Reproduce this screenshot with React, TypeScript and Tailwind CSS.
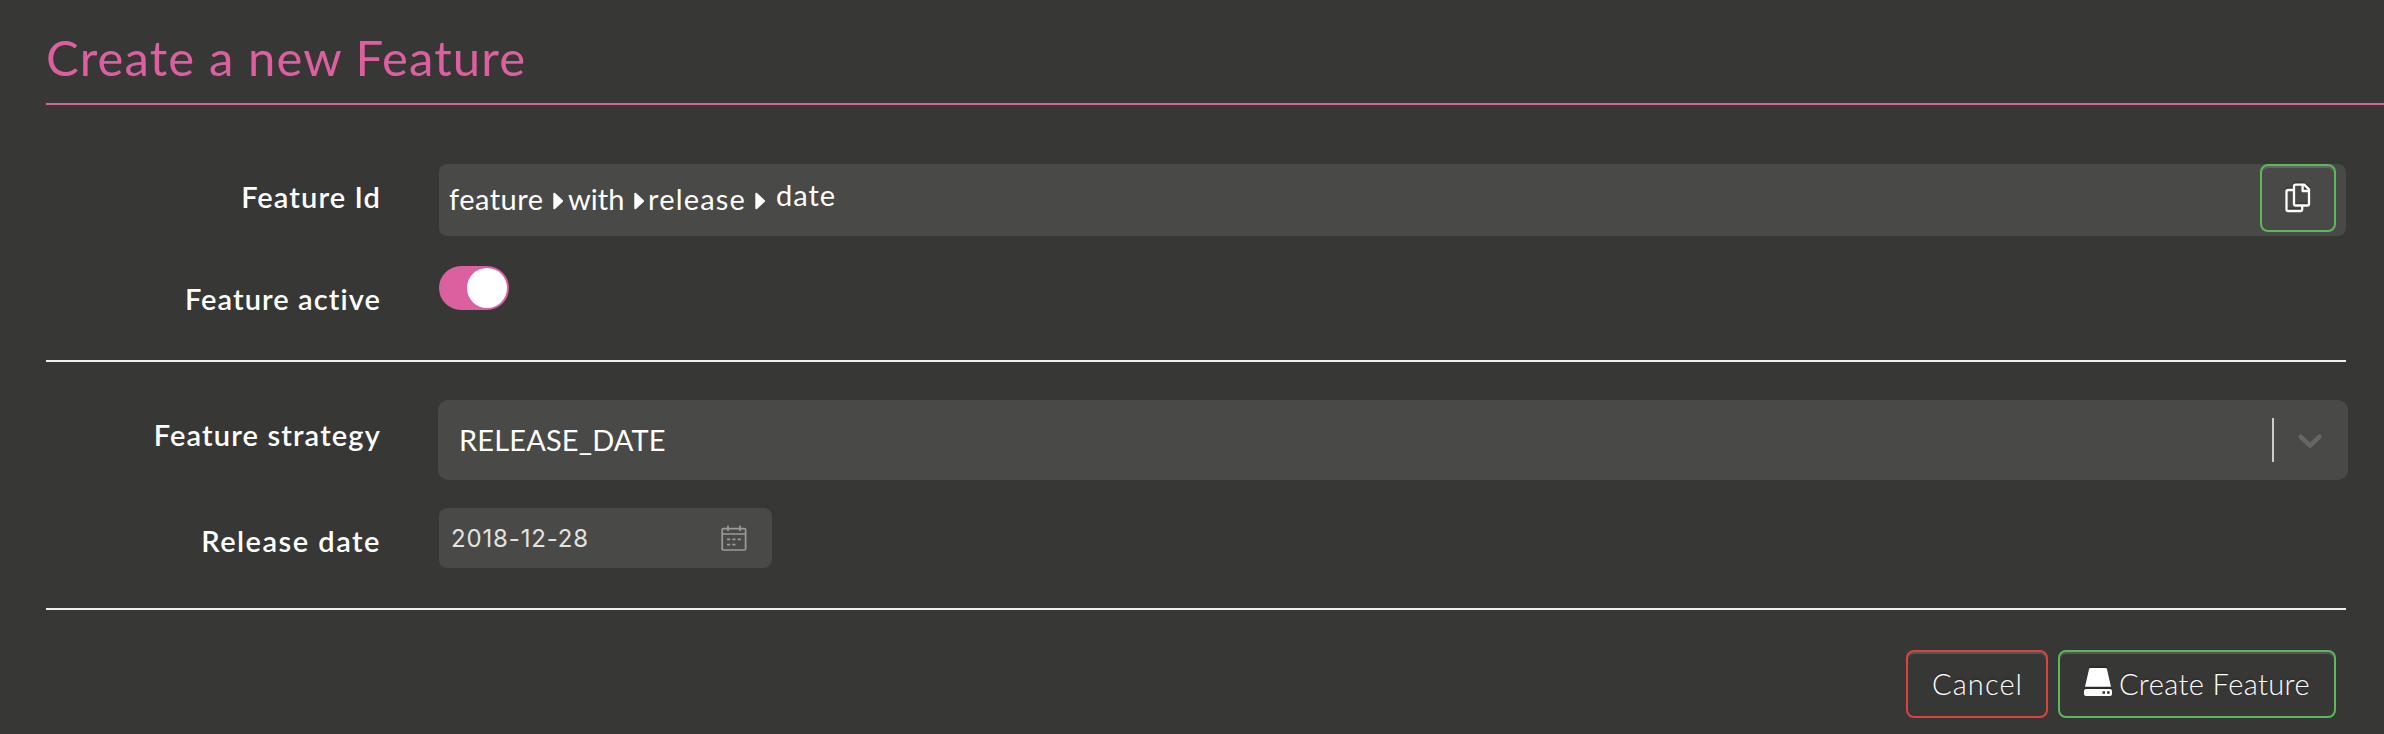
import type { ReactNode } from "react";

function Label({ children, className }: { children: ReactNode; className: string }) {
  return (
    <label className={`block w-[335px] shrink-0 text-right font-semibold leading-[40px] whitespace-nowrap ${className}`}>
      {children}
    </label>
  );
}

function Caret({ className }: { className: string }) {
  return (
    <svg className={`block h-[18px] w-[11px] shrink-0 ${className}`} viewBox="0 0 11 18" fill="#fff">
      <path d="M0.3 1.7C0.3 0.6 1.3 0.3 2 1.1L9.8 8.3C10.3 8.8 10.3 9.3 9.8 9.8L2 16.9C1.3 17.6 0.3 17.3 0.3 16.3Z" />
    </svg>
  );
}

function CopyIcon() {
  return (
    <svg className="block h-[30px] w-[26px] drop-shadow-[0_-2px_0_rgba(0,0,0,0.2)]" viewBox="0 0 26 30" fill="none" stroke="#fff" strokeWidth="2.3" strokeLinejoin="round">
      <path d="M8.5 7H3.2Q1.5 7 1.5 8.7V26.3Q1.5 28 3.2 28H15.5Q17.2 28 17.2 26.3V23" />
      <path d="M10.7 1.6H19.2L24 6.4V20.8Q24 22.5 22.3 22.5H10.7Q9 22.5 9 20.8V3.3Q9 1.6 10.7 1.6Z" />
      <path d="M17.6 2V8H23.6" />
    </svg>
  );
}

function DriveIcon() {
  return (
    <svg className="block h-[28px] w-[28px] drop-shadow-[0_-2px_0_rgba(0,0,0,0.2)]" viewBox="0 0 28 28" fill="#fff">
      <path d="M6.3 0H21.4Q22.7 0 23 1.2L27 18.7H1L5 1.2Q5.3 0 6.3 0Z" />
      <path fillRule="evenodd" d="M2 21H26Q28 21 28 23V26Q28 28 26 28H2Q0 28 0 26V23Q0 21 2 21ZM18.5 23.3V25.7H21V23.3ZM23.2 23.3V25.7H25.6V23.3Z" />
    </svg>
  );
}

function CalendarIcon() {
  return (
    <svg className="block h-[26px] w-[26px]" viewBox="0 0 26 26" fill="none" stroke="#9b9b9a" strokeWidth="1.7">
      <rect x="1.2" y="3.6" width="23.4" height="21.4" rx="1.2" />
      <path d="M1.2 9H24.6M7 0.6V6M19 0.6V6" />
      <path d="M6 14.4h3.2M11.3 14.4h3.2M16.7 14.4h3.2M6 19.6h3.2M11.3 19.6h3.2" />
    </svg>
  );
}

export default function App() {
  return (
    <div className="h-[734px] w-[2384px] overflow-hidden bg-[#373735] pl-[46px] font-['Lato','Open_Sans',sans-serif] text-[29px] text-white">
      <header className="h-[105px] border-b-2 border-[#dc5f9f] pt-[27px]">
        <h1 className="text-[49px] leading-[60px] tracking-[1.1px] text-[#dc5f9f]">Create a new Feature</h1>
      </header>

      <main className="w-[2300px]">
        <section className="flex h-[257px] flex-col border-b-2 border-[#efefed] pt-[59px]">
          <div className="flex h-[102px]">
            <Label className="mt-[13px] tracking-[1.1px]">Feature Id</Label>
            <div className="ml-[58px] flex h-[72px] w-[1907px] items-start rounded-[8px] bg-[#494947] pl-[10px] pr-[10px] leading-[40px]">
              <span className="mt-[15px] w-[104px] tracking-[0.5px]">feature</span>
              <Caret className="mt-[28px]" />
              <span className="mt-[15px] ml-[4px] w-[66px]">with</span>
              <Caret className="mt-[28px]" />
              <span className="mt-[15px] ml-[3px] w-[107px] tracking-[1.2px]">release</span>
              <Caret className="mt-[28px]" />
              <span className="mt-[11px] ml-[10px] tracking-[1px]">date</span>
              <button className="ml-auto flex h-[68px] w-[76px] items-start justify-center rounded-[8px] border-2 border-[#5cb85c] pt-[17px] shadow-[inset_0_2px_0_rgba(255,255,255,0.15)]">
                <CopyIcon />
              </button>
            </div>
          </div>
          <div className="flex">
            <Label className="mt-[13px] tracking-[1.08px]">Feature active</Label>
            <button className="ml-[58px] flex h-[44px] w-[70px] items-center justify-end rounded-full bg-[#dc5f9f] pr-[2px]">
              <span className="block h-[40px] w-[40px] rounded-full bg-white" />
            </button>
          </div>
        </section>

        <section className="flex h-[248px] flex-col border-b-2 border-[#efefed] pt-[38px]">
          <div className="flex h-[108px]">
            <Label className="mt-[15px] tracking-[1.15px]">Feature strategy</Label>
            <div className="-mr-[2px] ml-[57px] flex h-[80px] w-[1910px] shrink-0 items-center rounded-[10px] bg-[#494947] pl-[21px]">
              <span className="-mt-[1px] leading-[40px] tracking-[0.15px]">RELEASE_DATE</span>
              <span className="ml-auto block h-[44px] w-[2px] bg-[#cccccc]" />
              <svg className="mr-[18px] ml-[16px] block h-[40px] w-[40px]" viewBox="0 0 20 20" fill="#666">
                <path d="M4.516 7.548c0.436-0.446 1.043-0.481 1.576 0l3.908 3.747 3.908-3.747c0.533-0.481 1.141-0.446 1.574 0 0.436 0.445 0.408 1.197 0 1.615-0.406 0.418-4.695 4.502-4.695 4.502-0.217 0.223-0.502 0.335-0.787 0.335s-0.57-0.112-0.789-0.335c0 0-4.287-4.084-4.695-4.502s-0.436-1.17 0-1.615z" />
              </svg>
            </div>
          </div>
          <div className="flex">
            <Label className="mt-[13px] tracking-[1.5px]">Release date</Label>
            <div className="ml-[58px] flex h-[60px] w-[333px] items-center justify-between rounded-[8px] bg-[#494947] pr-[25px] pl-[12px]">
              <span className="mt-[2px] font-['Inter',sans-serif] text-[24px] leading-[32px] tracking-[0.85px] text-[#e3e3e2]">2018-12-28</span>
              <CalendarIcon />
            </div>
          </div>
        </section>

        <footer className="flex justify-end gap-[10px] pt-[40px] pr-[10px] font-light leading-[40px]">
          <button className="flex h-[68px] w-[142px] rounded-[8px] border-2 border-[#d9443f] pt-[12px] pl-[24px] tracking-[1.1px] shadow-[inset_0_2px_0_rgba(255,255,255,0.15)] [text-shadow:0_-2px_0_rgba(0,0,0,0.2)]">
            Cancel
          </button>
          <button className="flex h-[68px] w-[278px] rounded-[8px] border-2 border-[#5cb85c] pl-[24px] shadow-[inset_0_2px_0_rgba(255,255,255,0.15)] [text-shadow:0_-2px_0_rgba(0,0,0,0.2)]">
            <span className="mt-[16px] block">
              <DriveIcon />
            </span>
            <span className="mt-[12px] ml-[7px] whitespace-nowrap tracking-[0.4px]">Create Feature</span>
          </button>
        </footer>
      </main>
    </div>
  );
}
